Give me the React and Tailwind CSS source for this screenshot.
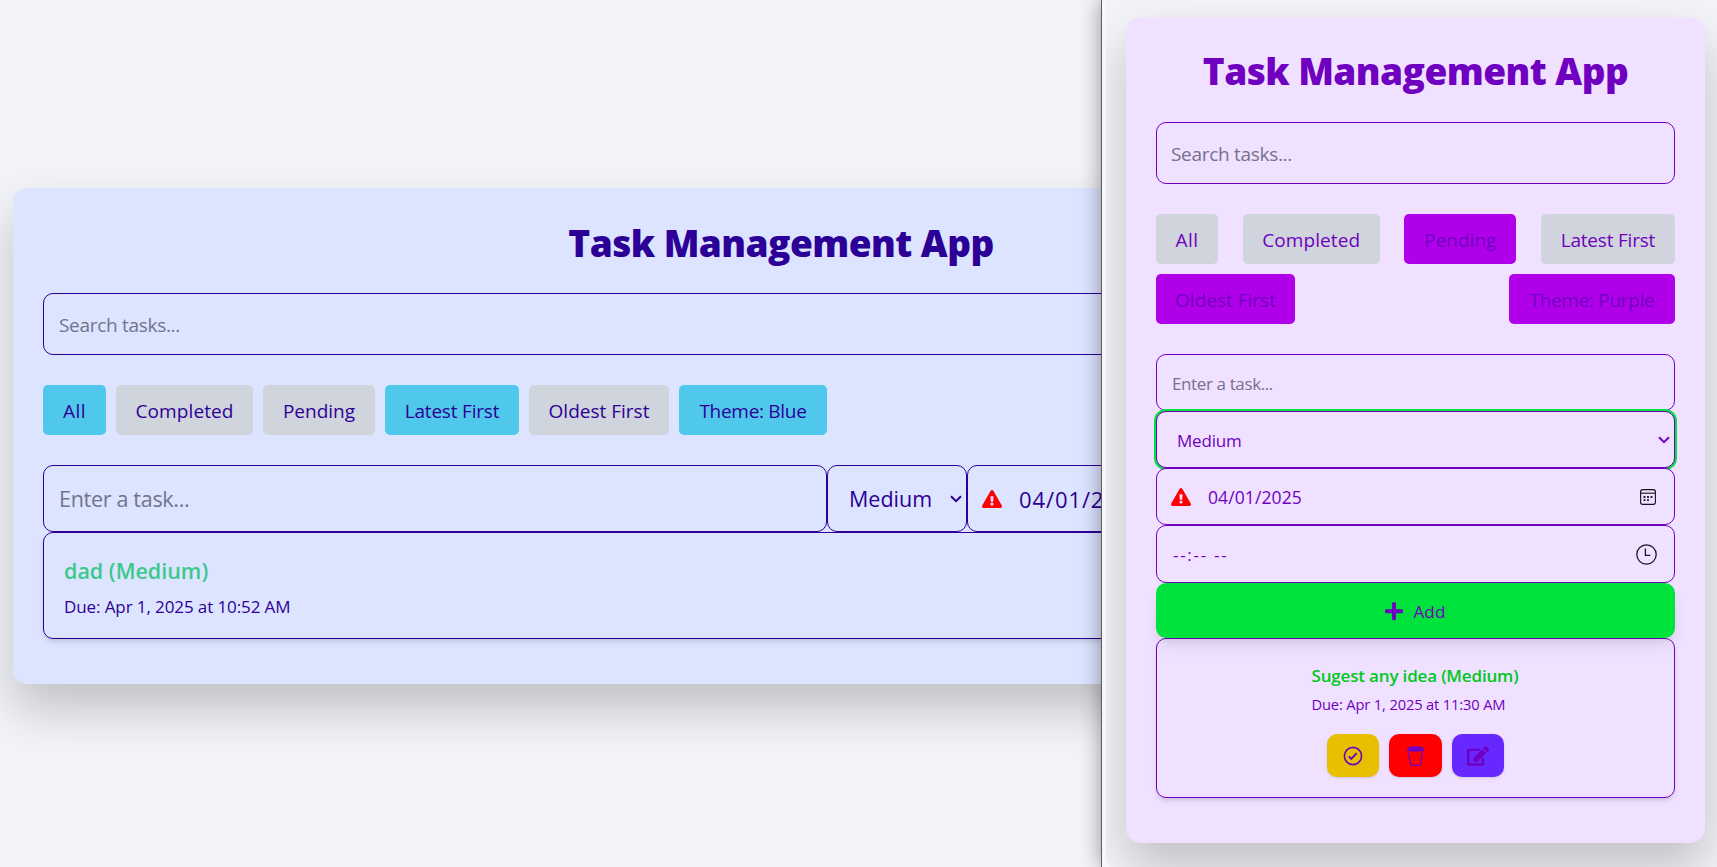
import React from 'react';
import { FaExclamationTriangle, FaPlus, FaEdit } from 'react-icons/fa';

function Chevron({ className }) {
  return (
    <svg className={className} width="12" height="8" viewBox="0 0 12 8" fill="none" stroke="currentColor" strokeWidth="2">
      <path d="M1 1.2 6 6.2 11 1.2" />
    </svg>
  );
}

function CheckIcon() {
  return (
    <svg width="20" height="20" viewBox="0 0 20 20" fill="none" stroke="currentColor" strokeWidth="1.6">
      <circle cx="10" cy="10" r="8.6" />
      <path d="M5.8 10.4 8.3 12.9 13.7 7.1" strokeWidth="1.9" />
    </svg>
  );
}

function TrashIcon() {
  return (
    <svg width="17" height="20" viewBox="0 0 17 20" fill="none" stroke="currentColor" strokeWidth="1.3">
      <ellipse cx="8.5" cy="2.9" rx="7.7" ry="2.1" fill="currentColor" />
      <path d="M0.9 3.2 3.3 17.6c.2 1.1.9 1.7 2 1.7h6.4c1.1 0 1.8-.6 2-1.7L16.1 3.2" />
    </svg>
  );
}

function CalendarIcon() {
  return (
    <svg width="16" height="16" viewBox="0 0 16 16" fill="none" stroke="#15101c" strokeWidth="1.1">
      <rect x="0.6" y="0.6" width="14.8" height="14.8" rx="2.2" />
      <path d="M0.6 4.2h14.8" />
      <path d="M3.6 8h1.8M7.1 8h1.8M10.6 8h1.8M3.6 11.2h1.8M7.1 11.2h1.8" strokeWidth="1.8" />
    </svg>
  );
}

function ClockIcon() {
  return (
    <svg width="21" height="21" viewBox="0 0 21 21" fill="none" stroke="#15101c" strokeWidth="1.25">
      <circle cx="10.5" cy="10.5" r="9.7" />
      <path d="M9.4 4.4v6.9h4.9" />
    </svg>
  );
}

function Chip({ label, className }) {
  return (
    <button className={`h-[50px] shrink-0 whitespace-nowrap rounded-[5px] text-center text-[19px] pt-[3px] ${className}`}>
      {label}
    </button>
  );
}

const desktopFilters = [
  { label: 'All', className: 'w-[63px] bg-[#50c8ec] tracking-[0.4px]' },
  { label: 'Completed', className: 'w-[137px] bg-[#d0d4dc] tracking-[0.1px]' },
  { label: 'Pending', className: 'w-[112px] bg-[#d0d4dc]' },
  { label: 'Latest First', className: 'w-[134px] bg-[#50c8ec] tracking-[-0.2px]' },
  { label: 'Oldest First', className: 'w-[140px] bg-[#d0d4dc]' },
  { label: 'Theme: Blue', className: 'w-[148px] bg-[#50c8ec] tracking-[-0.3px]' },
];

const mobileFilters = [
  { label: 'All', className: 'w-[62px] bg-[#d0d4dc] tracking-[0.4px]' },
  { label: 'Completed', className: 'w-[137px] bg-[#d0d4dc] tracking-[0.1px]' },
  { label: 'Pending', className: 'w-[112px] bg-[#b000ea]' },
  { label: 'Latest First', className: 'w-[134px] bg-[#d0d4dc] tracking-[-0.2px]' },
  { label: 'Oldest First', className: 'w-[139px] bg-[#b000ea]' },
  { label: 'Theme: Purple', className: 'w-[166px] bg-[#b000ea] tracking-[-0.3px]' },
];

function DesktopView() {
  return (
    <div className="h-[867px] w-[1101px] shrink-0 overflow-hidden bg-[#f3f4f8] pl-[13px] pt-[188px]">
      <div className="h-[496px] w-[1536px] rounded-[14px] bg-[#dde4ff] px-[30px] pt-[30px] text-[#2c0096] shadow-[0_25px_50px_rgba(0,0,0,0.21)]">
        <h1 className="h-[75px] text-center text-[37px] font-extrabold leading-[50px] tracking-[-0.55px]">
          Task Management App
        </h1>
        <div className="flex h-[62px] items-center rounded-[10px] border border-[#2c0096] px-[15px] pt-[3px] text-[19px] tracking-[-0.3px] text-[#70758a]">
          Search tasks...
        </div>
        <div className="mt-[30px] flex gap-[10px]">
          {desktopFilters.map((f) => (
            <Chip key={f.label} {...f} />
          ))}
        </div>
        <div className="mt-[30px] flex h-[67px] text-[21.5px]">
          <div className="flex w-[784px] items-center rounded-[10px] border border-[#2c0096] px-[15px] pt-0.5 tracking-[-0.3px] text-[#70758a]">
            Enter a task...
          </div>
          <div className="flex w-[140px] items-center justify-between rounded-[10px] border border-[#2c0096] pl-[21px] pr-1">
            <span className="pt-0.5">Medium</span>
            <Chevron />
          </div>
          <div className="flex flex-1 items-center gap-[17px] rounded-[10px] border border-[#2c0096] pl-[14px]">
            <FaExclamationTriangle className="h-[18px] w-5 text-[#ff0000]" />
            <span className="pt-0.5 text-[22px] tracking-[0.9px]">04/01/2025</span>
          </div>
        </div>
        <div className="h-[107px] rounded-[10px] border border-[#2c0096] px-5 pt-[22px] shadow-md">
          <div className="text-[21.5px] font-semibold leading-8 text-[#3cc88a]">dad (Medium)</div>
          <div className="mt-[6px] text-[17px] leading-7 tracking-[-0.1px]">Due: Apr 1, 2025 at 10:52 AM</div>
        </div>
      </div>
    </div>
  );
}

function MobileView() {
  return (
    <div className="relative z-10 h-[867px] w-[616px] shrink-0 border-l border-[#5c5c66] bg-[#f8f6f6] pl-1 shadow-[0_0_20px_rgba(0,0,0,0.4)]">
      <div className="h-full overflow-hidden rounded-bl-lg bg-[#f3f4f8] pl-5 pt-[17px]">
        <div className="h-[826px] w-[579px] rounded-[15px] bg-[#efe1ff] px-[30px] pt-[29px] text-[#7000c0] shadow-[0_25px_50px_rgba(0,0,0,0.21)]">
          <h1 className="h-[76px] text-center text-[37px] font-extrabold leading-[50px] tracking-[-0.55px]">
            Task Management App
          </h1>
          <div className="flex h-[62px] items-center rounded-[10px] border border-[#7000c0] px-[14px] pt-[3px] text-[19px] tracking-[-0.3px] text-[#78708c]">
            Search tasks...
          </div>
          <div className="mt-[30px] flex flex-wrap justify-between gap-[10px]">
            {mobileFilters.map((f) => (
              <Chip key={f.label} {...f} />
            ))}
          </div>
          <div className="mt-[30px] flex flex-col text-[17px]">
            <div className="flex h-[57px] items-center rounded-[10px] border border-[#7000c0] px-[15px] pt-0.5 tracking-[-0.38px] text-[#78708c]">
              Enter a task...
            </div>
            <div className="flex h-[57px] items-center justify-between rounded-[10px] border border-[#7000c0] bg-[#efe1ff] pl-5 pr-1 tracking-[-0.2px] ring-2 ring-[#00e23c]">
              <span className="pt-0.5">Medium</span>
              <Chevron />
            </div>
            <div className="flex h-[57px] items-center rounded-[10px] border border-[#7000c0] bg-[#efe1ff] pl-[14px] pr-[18px]">
              <FaExclamationTriangle className="h-[18px] w-5 text-[#ff0000]" />
              <span className="flex-1 pl-[17px] pt-0.5 text-[17.5px] tracking-[0.1px]">04/01/2025</span>
              <CalendarIcon />
            </div>
            <div className="flex h-[58px] items-center justify-between rounded-[10px] border border-[#7000c0] bg-[#efe1ff] pl-4 pr-[17px]">
              <span className="whitespace-pre pt-0.5 tracking-[1.7px]">--:-- --</span>
              <ClockIcon />
            </div>
            <button className="flex h-[55px] items-center justify-center gap-[10px] rounded-[10px] bg-[#00e23c] shadow-lg">
              <FaPlus className="mt-px h-[20.5px] w-[18px]" />
              <span className="pt-0.5 tracking-[0.2px]">Add</span>
            </button>
          </div>
          <div className="flex h-[160px] flex-col items-center rounded-[10px] border border-[#7000c0] pt-[23px] shadow-md">
            <div className="w-[208px] whitespace-nowrap">
              <div className="text-[17px] font-semibold leading-7 tracking-[-0.17px] text-[#00c81e]">
                Sugest any idea (Medium)
              </div>
              <div className="mt-0.5 text-[14.7px] leading-6 tracking-[-0.15px]">Due: Apr 1, 2025 at 11:30 AM</div>
            </div>
            <div className="mt-[18px] flex gap-[10px]">
              <button className="flex h-[43px] w-[52px] items-center justify-center rounded-[10px] bg-[#e8c000] shadow-sm">
                <CheckIcon />
              </button>
              <button className="flex h-[43px] w-[53px] items-center justify-center rounded-[10px] bg-[#ff0000] shadow-sm">
                <TrashIcon />
              </button>
              <button className="flex h-[43px] w-[52px] items-center justify-center rounded-[10px] bg-[#6628ff] shadow-sm">
                <FaEdit className="h-5 w-[22px]" />
              </button>
            </div>
          </div>
        </div>
      </div>
    </div>
  );
}

export default function App() {
  return (
    <div className="flex h-[867px] w-[1717px] overflow-hidden font-['Open_Sans',sans-serif]">
      <DesktopView />
      <MobileView />
    </div>
  );
}
